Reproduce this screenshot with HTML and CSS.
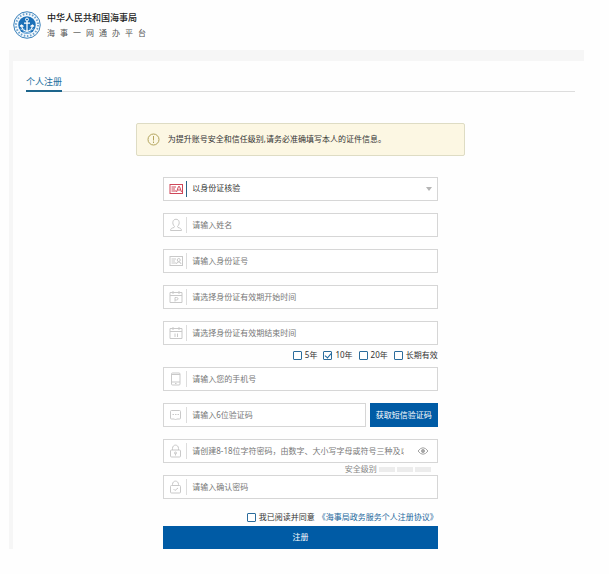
FILE: index.html
```html
<!DOCTYPE html>
<html lang="zh-CN">
  <head>
    <meta charset="utf-8" />
    <title>个人注册</title>
    <link rel="stylesheet" href="styles.css">
  </head>
  <body>
    <header class="header">
      <svg class="logo" viewBox="0 0 56 56" fill="none">
        <circle cx="28" cy="28" r="26.5" fill="#f4f9fd" stroke="#3b82bb" stroke-width="2" />
        <circle cx="28" cy="28" r="22" stroke="#6fa3cd" stroke-width="4" stroke-dasharray="3 3.3" />
        <circle cx="28" cy="28" r="17.500" fill="#1b70b8" />
        <circle cx="28" cy="17" r="3" stroke="#fff" stroke-width="2" />
        <path d="M28 20v20M22 24h12M17 29c1 8 5 11 11 12c6-1 10-4 11-12M14 31l3-3l4 3M35 31l4-3l3 3" stroke="#fff" stroke-width="2.5" />
        <path d="M15 36q4 3 8 0M33 36q4 3 8 0M20 42q8 4 16 0" stroke="#a9d0ee" stroke-width="2" />
      </svg>
      <div>
        <div class="site-name">中华人民共和国海事局</div>
        <div class="site-sub">海事一网通办平台</div>
      </div>
    </header>

    <main class="page">
      <div class="panel">
        <div class="tabs">
          <h1>个人注册</h1>
        </div>

        <div class="notice">
          <svg class="notice-icon" viewBox="0 0 26 26" fill="none" stroke="#b3a45c" stroke-width="2">
            <circle cx="13" cy="13" r="11" />
            <path d="M13 6v9M13 17v3" />
          </svg>
          <span>为提升账号安全和信任级别,请务必准确填写本人的证件信息。</span>
        </div>

        <form class="form">
          <div class="field active">
            <label for="verifyType" aria-label="核验方式">
              <svg viewBox="0 0 28 28">
                <rect x="2" y="5" width="25" height="18" />
                <path d="M5 10h9M5 14h7M5 18h9M15 20l4-11h2l4 11M17 16h6" />
              </svg>
            </label>
            <select id="verifyType">
              <option>以身份证核验</option>
            </select>
            <span class="arrow"></span>
          </div>

          <div class="field">
            <label for="userName" aria-label="姓名">
              <svg viewBox="0 0 28 28">
                <path d="M11 17c-3-3-4-7-3-10c1-6 11-6 12 0c1 3 0 7-3 10l1 2c4 1 7 2 7 6H3c0-4 3-5 7-6z" />
              </svg>
            </label>
            <input type="text" id="userName" placeholder="请输入姓名" />
          </div>

          <div class="field">
            <label for="idNumber" aria-label="身份证号">
              <svg viewBox="0 0 28 28">
                <rect x="2" y="5" width="25" height="18" />
                <path d="M5 10h9M5 14h7M5 18h9M15 20q0-4 4-4q5 0 5 4" />
                <circle cx="19.5" cy="12" r="3" />
              </svg>
            </label>
            <input type="text" id="idNumber" placeholder="请输入身份证号" />
          </div>

          <div class="field">
            <label for="startDate" aria-label="开始时间">
              <svg viewBox="0 0 28 28">
                <path d="M2 5h24v20H2zM2 11h24M8 2v6M20 2v6M12 23v-8h3q3 0 3 2.5t-3 2.5h-3" />
              </svg>
            </label>
            <input type="text" id="startDate" placeholder="请选择身份证有效期开始时间" />
          </div>

          <div class="field">
            <label for="endDate" aria-label="结束时间">
              <svg viewBox="0 0 28 28">
                <path d="M2 5h24v20H2zM2 11h24M8 2v6M20 2v6M12 15v7M17 15v7" />
              </svg>
            </label>
            <input type="text" id="endDate" placeholder="请选择身份证有效期结束时间" />
          </div>

          <div class="terms">
            <label><input type="checkbox" />5年</label>
            <label><input type="checkbox" checked />10年</label>
            <label><input type="checkbox" />20年</label>
            <label><input type="checkbox" />长期有效</label>
          </div>

          <div class="field">
            <label for="phone" aria-label="手机号">
              <svg viewBox="0 0 28 28">
                <rect x="5" y="2" width="17" height="24" rx="2" />
                <path d="M5 5h17M5 20h17M12 23h3" />
              </svg>
            </label>
            <input type="tel" id="phone" placeholder="请输入您的手机号" />
          </div>

          <div class="code-row">
            <div class="field">
              <label for="smsCode" aria-label="验证码">
                <svg viewBox="0 0 28 28">
                  <path d="M5 5h16q2 0 2 2v13q0 2-2 2h-6l-2 2l-2-2H5q-2 0-2-2V7q0-2 2-2zM7 13h3M12 13h3M17 13h3" />
                </svg>
              </label>
              <input type="text" id="smsCode" placeholder="请输入6位验证码" />
            </div>
            <button type="button" class="code-btn">获取短信验证码</button>
          </div>

          <div class="field">
            <label for="password" aria-label="密码">
              <svg viewBox="0 0 28 28">
                <rect x="3" y="12" width="20" height="14" rx="2" />
                <path d="M7 12V9c0-9 12-9 12 0v3M13 19v4" />
                <circle cx="13" cy="18" r="2" />
              </svg>
            </label>
            <input type="password" id="password" placeholder="请创建8-18位字符密码，由数字、大小写字母或符号三种及以上组成" />
            <button type="button" class="eye" aria-label="显示密码">
              <svg viewBox="0 0 24 16" fill="none" stroke="#a5a5a5" stroke-width="2">
                <path d="M2 8q10-13 20 0q-10 13-20 0z" />
                <circle cx="12" cy="8" r="3" fill="#a5a5a5" />
              </svg>
            </button>
          </div>

          <div class="strength">
            <span>安全级别</span><i></i><i></i><i></i>
          </div>

          <div class="field">
            <label for="password2" aria-label="确认密码">
              <svg viewBox="0 0 28 28">
                <rect x="3" y="11" width="20" height="15" rx="2" />
                <path d="M7 11V9c0-9 12-9 12 0v2M9 18l3 3l6-5" />
              </svg>
            </label>
            <input type="password" id="password2" placeholder="请输入确认密码" />
          </div>

          <div class="agree">
            <label><input type="checkbox" />我已阅读并同意</label>
            <a href="#">《海事局政务服务个人注册协议》</a>
          </div>
          <button type="submit" class="submit">注册</button>
        </form>
      </div>
    </main>
  </body>
</html>
```
FILE: styles.css
```css
* {
  box-sizing: border-box;
}

body,
input,
select,
button {
  font-family: "Noto Sans", "Noto Sans CJK SC", sans-serif;
  font-size: 8px;
  line-height: 12px;
}

body {
  margin: 0;
  background-color: #fefefe;
  color: #333;
}

svg {
  display: block;
}

.header {
  display: flex;
  align-items: center;
  gap: 6px;
  height: 50px;
  padding: 0 13px;
}

.logo {
  width: 28px;
  height: 28px;
}

.site-name {
  font-size: 9px;
  line-height: 16px;
  font-weight: 500;
  color: #222;
}

.site-sub {
  line-height: 14px;
  letter-spacing: 5px;
  color: #555;
}

.page {
  margin: 0 25px 0 9px;
  padding: 11px 0 0 4px;
  background-color: #f6f6f6;
}

.panel {
  padding: 12px 9px 0 13px;
  background-color: #fefefe;
}

.tabs {
  display: flex;
  border-bottom: 1px solid #ddd;
}

h1 {
  margin: 0 0 -1px;
  font-size: 9px;
  line-height: 17px;
  font-weight: normal;
  color: #24709f;
  border-bottom: 2px solid #1d658c;
}

.notice {
  display: flex;
  align-items: center;
  gap: 8px;
  width: 60%;
  height: 33px;
  margin: 31px auto 21px;
  padding: 0 10px 1px;
  border: 1px solid #dedcc4;
  border-radius: 2px;
  background-color: #fcf7e3;
}

.notice-icon {
  width: 13px;
  height: 13px;
}

.form {
  width: 50%;
  margin: 0 auto;
}

.field {
  display: flex;
  align-items: center;
  height: 24px;
  margin-bottom: 12px;
  padding-left: 5px;
  border: 1px solid #d6d6d6;
  background-color: #fff;
}

.field label {
  padding: 1px 3px 1px 0;
  border-right: 1px solid #ddd;
}

.field label svg {
  width: 14px;
  height: 14px;
  fill: none;
  stroke: #c9c9c9;
  stroke-width: 2;
}

.active label {
  border-right-color: #2b6488;
}

.active label svg {
  stroke: #cf4759;
}

.field input,
.field select {
  flex: 1;
  min-width: 0;
  height: 22px;
  padding: 0 5px 2px;
  border: none;
  outline: none;
  background: none;
  color: #333;
  appearance: none;
}

.field input::placeholder {
  color: #777;
}

.arrow {
  margin-right: 5px;
  border: 3px solid transparent;
  border-top: 4px solid #b5b5b5;
  border-bottom: none;
}

/* checkboxes */
.terms,
.agree {
  display: flex;
  justify-content: flex-end;
}

.terms {
  gap: 6px;
  margin-top: -12px;
  padding: 4px 0 6px;
}

.terms label,
.agree label {
  display: flex;
  align-items: center;
  gap: 3px;
}

input[type="checkbox"] {
  appearance: none;
  width: 9px;
  height: 9px;
  margin: 0;
  border: 1px solid #2b6c9c;
  border-radius: 1px;
  background-color: #fff;
}

input[type="checkbox"]:checked::before {
  content: "";
  display: block;
  width: 3px;
  height: 5px;
  margin-left: 2px;
  border: solid #1764a0;
  border-width: 0 1px 1px 0;
  transform: rotate(40deg);
}

.code-row {
  display: flex;
  gap: 4px;
}

.code-row .field {
  flex: 1;
}

button {
  padding: 0 0 1px;
  border: none;
  color: #fff;
  background-color: #005ba5;
  cursor: pointer;
}

.code-btn {
  width: 68px;
  height: 24px;
}

.field .eye {
  margin: 0 8px;
  background: none;
}

.eye svg {
  width: 12px;
  height: 8px;
}

.strength {
  display: flex;
  align-items: center;
  gap: 2px;
  justify-content: flex-end;
  height: 12px;
  margin-top: -12px;
  padding-right: 7px;
  color: #888;
}

.strength i {
  width: 16px;
  height: 5px;
  background-color: #ececec;
}

.agree {
  gap: 3px;
  padding-bottom: 3px;
}

.agree a {
  color: #1c679c;
  text-decoration: none;
}

.submit {
  display: block;
  width: 100%;
  height: 23px;
}
```
